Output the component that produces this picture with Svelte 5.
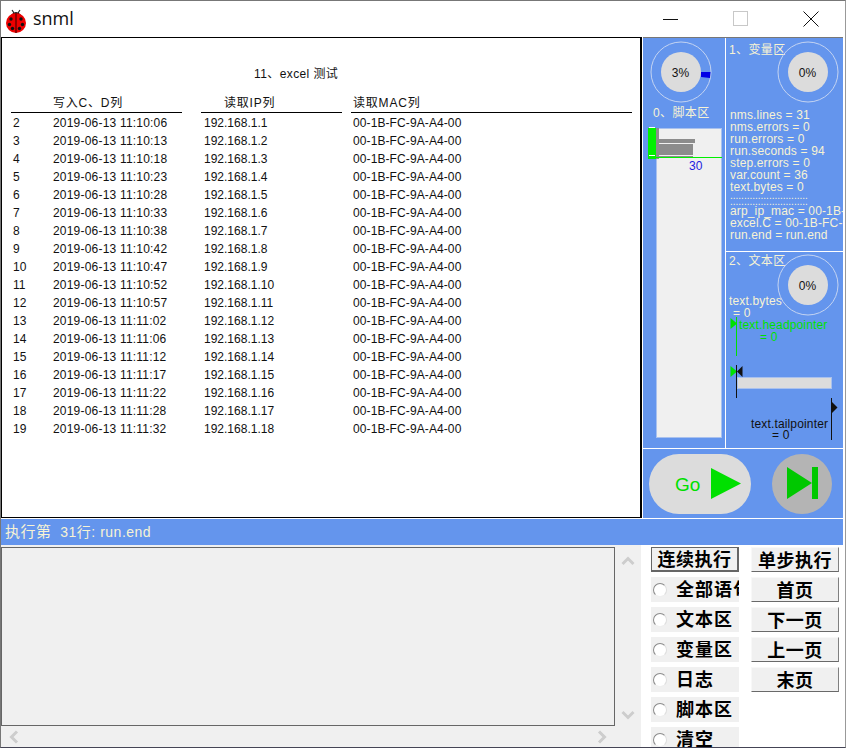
<script>
  const times = ['11:10:06','11:10:13','11:10:18','11:10:23','11:10:28','11:10:33','11:10:38','11:10:42','11:10:47','11:10:52','11:10:57','11:11:02','11:11:06','11:11:12','11:11:17','11:11:22','11:11:28','11:11:32'];
  const rows = times.map((t, i) => ({ n: i + 2, time: '2019-06-13 ' + t, ip: '192.168.1.' + (i + 1), mac: '00-1B-FC-9A-A4-00' }));
  const vars = ['nms.lines = 31','nms.errors = 0','run.errors = 0','run.seconds = 94','step.errors = 0','var.count = 36','text.bytes = 0'];
  const radios = ['全部语句','文本区','变量区','日志','脚本区','清空'];
  const pages = ['首页','下一页','上一页','末页'];
</script>

{#snippet gauge(label, arc)}
  <svg class="gauge" width="64" height="64" viewBox="0 0 64 64">
    <circle cx="32" cy="32" r="30" fill="none" stroke="#c4d4f2" stroke-width="1" />
    <circle cx="32" cy="32" r="20" fill="#dcdcdc" />
    {#if arc}
      <path d="M52 32 H61.500 L61 38 L52 37 Z" fill="#0000e6" />
    {/if}
    <text x="31.5" y="36.5" text-anchor="middle" class="gauge-text">{label}</text>
  </svg>
{/snippet}

<div class="window">
  <header class="titlebar">
    <svg class="bug" width="22" height="26" viewBox="0 0 22 26">
      <path d="M7 3 L9 6 M15 3 L13 6" stroke="#222" stroke-width="1.2" />
      <path d="M6 8 Q11 2 16 8 Z" fill="#111" />
      <ellipse cx="11" cy="16" rx="10" ry="10" fill="#ee0000" />
      <path d="M11 6 V26" stroke="#300" stroke-width="1" />
      <circle cx="6" cy="12" r="1.7" fill="#111" /><circle cx="16" cy="12" r="1.7" fill="#111" />
      <circle cx="4.5" cy="17.5" r="1.7" fill="#111" /><circle cx="17.5" cy="17.5" r="1.7" fill="#111" />
      <circle cx="7.5" cy="21.5" r="1.7" fill="#111" /><circle cx="14.5" cy="21.5" r="1.7" fill="#111" />
    </svg>
    <span class="app-name">snml</span>
    <div class="controls">
      <svg width="16" height="16" viewBox="0 0 16 16"><path d="M0 8.5 H15" stroke="#111" /></svg>
      <svg width="16" height="16" viewBox="0 0 16 16"><rect x="0.5" y="0.5" width="14" height="14" fill="none" stroke="#c8c8c8" /></svg>
      <svg width="16" height="16" viewBox="0 0 16 16"><path d="M0.5 0.5 L15.5 15.5 M15.5 0.5 L0.5 15.5" stroke="#111" /></svg>
    </div>
  </header>

  <main class="main">
    <section class="report">
      <h1>11、excel 测试</h1>
      <div class="grid head">
        <div class="c1">写入C、D列</div>
        <div class="c2">读取IP列</div>
        <div class="c3">读取MAC列</div>
      </div>
      {#each rows as r}
        <div class="grid row">
          <div class="cell-1"><span class="num">{r.n}</span><span class="time">{r.time}</span></div>
          <div class="cell-2">{r.ip}</div>
          <div class="cell-3">{r.mac}</div>
        </div>
      {/each}
    </section>

    <aside class="side">
      <div class="script-panel">
        <div class="script-gauge">{@render gauge('3%', true)}</div>
        <div class="panel-title center">0、脚本区</div>
        <div class="script-map">
          <svg width="76" height="312" viewBox="0 0 76 312">
            <rect x="8.500" y="1.500" width="65" height="309" fill="#f0f0f0" stroke="#a9c1ee" />
            <rect x="8" y="1" width="3" height="31" fill="#8c8c8c" />
            <rect x="8" y="12" width="39" height="4" fill="#8c8c8c" />
            <rect x="8" y="17" width="37" height="11" fill="#8c8c8c" />
            <rect x="8" y="29" width="37" height="1" fill="#8c8c8c" />
            <rect x="0" y="1" width="8" height="31" fill="#00f000" />
            <path d="M1 0.5 H7 M1 28.5 H7" stroke="#fff" />
            <rect x="8" y="30" width="66" height="1" fill="#00f000" />
            <text x="41" y="43" class="mark">30</text>
          </svg>
        </div>
      </div>

      <div class="info-col">
        <div class="var-panel">
          <div class="panel-title">1、变量区</div>
          <div class="var-gauge">{@render gauge('0%', false)}</div>
          <div class="var-list">
            {#each vars as v}<div>{v}</div>{/each}
            <div class="dots">............................</div>
            <div class="dots">............................</div>
            <div>arp_ip_mac = 00-1B-FC-9A-A4-00</div>
            <div>excel.C = 00-1B-FC-9A-A4-00</div>
            <div>run.end = run.end</div>
          </div>
        </div>
        <div class="text-panel">
          <div class="panel-title">2、文本区</div>
          <div class="text-gauge">{@render gauge('0%', false)}</div>
          <svg class="pointers" width="117" height="155" viewBox="0 0 117 155">
            <text x="3" y="12" class="cream">text.bytes</text>
            <text x="7" y="24" class="cream">= 0</text>
            <path d="M4.500 25 V36 L11 30.500 Z" fill="#00e000" />
            <path d="M10.500 24 V63" stroke="#00e000" />
            <text x="13" y="36" class="green">text.headpointer</text>
            <text x="34" y="48" class="green">= 0</text>
            <path d="M4.500 73 V84 L11 78.500 Z" fill="#00e000" />
            <path d="M16.500 73 V84 L11 78.500 Z" fill="#111" />
            <rect x="11.500" y="84.500" width="94" height="11" fill="#dcdcdc" stroke="#a9c1ee" />
            <path d="M10.500 72 V105" stroke="#111" />
            <path d="M105.500 105 V147" stroke="#111" />
            <path d="M106 109 V120 L111.500 114.500 Z" fill="#111" />
            <text x="25" y="135" class="dark">text.tailpointer</text>
            <text x="46" y="146" class="dark">= 0</text>
          </svg>
        </div>
      </div>

      <div class="run-panel">
        <svg width="200" height="69" viewBox="0 0 200 69">
          <rect x="6" y="5" width="102" height="60" rx="30" fill="#dcdcdc" />
          <text x="32" y="42" class="go">Go</text>
          <path d="M68 19 V50 L98 34.500 Z" fill="#00e000" />
          <circle cx="159" cy="35" r="30" fill="#b4b4b4" />
          <path d="M144 18 V50 L169 34 Z" fill="#00c800" />
          <rect x="169" y="18" width="6" height="32" fill="#00c800" />
        </svg>
      </div>
    </aside>
  </main>

  <div class="status"><span class="status-cjk">执行第</span>&nbsp; 31行: run.end</div>

  <section class="console">
    <div class="log-area">
      <div class="log-row">
        <div class="log-box"></div>
        <div class="vscroll">
          <svg width="14" height="10" viewBox="0 0 14 10"><path d="M1.500 8 L7 2.500 L12.500 8" fill="none" stroke="#cdcdcd" stroke-width="3" /></svg>
          <svg width="14" height="10" viewBox="0 0 14 10"><path d="M1.500 2 L7 7.500 L12.500 2" fill="none" stroke="#cdcdcd" stroke-width="3" /></svg>
        </div>
      </div>
      <div class="hscroll">
        <svg width="10" height="14" viewBox="0 0 10 14"><path d="M8 1.500 L2.500 7 L8 12.500" fill="none" stroke="#cdcdcd" stroke-width="3" /></svg>
        <svg width="10" height="14" viewBox="0 0 10 14"><path d="M2 1.500 L7.500 7 L2 12.500" fill="none" stroke="#cdcdcd" stroke-width="3" /></svg>
      </div>
    </div>

    <div class="tools">
      <div class="tool-col">
        <button class="btn default">连续执行</button>
        {#each radios as label}
          <div class="radio"><span class="dot"></span><span class="radio-text">{label}</span></div>
        {/each}
      </div>
      <div class="tool-col">
        <button class="btn">单步执行</button>
        {#each pages as label}
          <button class="btn">{label}</button>
        {/each}
      </div>
    </div>
  </section>
</div>

<style>
  :global(body) {
    margin: 0;
    background: #fff;
  }

  .window {
    width: 846px;
    height: 748px;
    box-sizing: border-box;
    border: 1px solid #777;
    border-right-color: #999;
    border-bottom-color: #445;
    overflow: hidden;
    display: flex;
    flex-direction: column;
    background: #fff;
    font-family: "Liberation Sans", "Noto Sans CJK SC", sans-serif;
  }

  .titlebar {
    height: 36px;
    flex: none;
    display: flex;
    align-items: center;
    padding-left: 4px;
  }

  .bug {
    margin-top: 1px;
  }

  .app-name {
    margin-left: 6px;
    font-family: "Open Sans", sans-serif;
    font-size: 18px;
    color: #111;
    line-height: 34px;
    margin-bottom: 2px;
  }

  .controls {
    margin-left: auto;
    margin-bottom: 1px;
    padding-right: 26px;
    display: flex;
    gap: 54px;
  }

  .main {
    height: 481px;
    flex: none;
    display: flex;
  }

  .report {
    width: 641px;
    box-sizing: border-box;
    border: 1px solid #000;
    border-right-width: 2px;
    padding-left: 9px;
    font-size: 12px;
    color: #111;
  }

  h1 {
    margin: 28px 0 0;
    padding-left: 243px;
    font-size: 12px;
    font-weight: normal;
    line-height: 16px;
    letter-spacing: 0.4px;
  }

  .grid {
    display: grid;
    grid-template-columns: 190px 150px 281px;
  }

  .head {
    margin-top: 12px;
    height: 18px;
    line-height: 18px;
    letter-spacing: 0.8px;
  }

  .head > div {
    border-bottom: 1px solid #000;
  }

  .c1 {
    padding-left: 42px;
    margin-right: 19px;
  }

  .c2 {
    padding-left: 23px;
    margin-right: 9px;
  }

  .c3 {
    padding-left: 2px;
  }

  .row {
    height: 18px;
    line-height: 22px;
  }

  .num {
    display: inline-block;
    width: 40px;
  }

  .time {
    letter-spacing: 0.2px;
  }

  .cell-1 {
    padding-left: 2px;
  }

  .cell-2 {
    padding-left: 3px;
  }

  .cell-3 {
    padding-left: 2px;
    letter-spacing: 0.1px;
  }

  .side {
    margin-left: 1px;
    width: 200px;
    background: #6495ed;
    border-top: 1px solid #777;
    display: grid;
    grid-template-columns: 83px 117px;
    grid-template-rows: 411px 1fr;
    box-sizing: border-box;
    color: #f7f3d4;
  }

  .script-panel {
    border-right: 1px solid #fff;
    border-bottom: 1px solid #fff;
    box-sizing: border-box;
  }

  .script-gauge {
    padding: 2px 0 0 6px;
    height: 64px;
  }

  .gauge {
    display: block;
  }

  .gauge-text {
    font-size: 12px;
    fill: #111;
  }

  .panel-title {
    font-size: 12px;
    line-height: 18px;
    letter-spacing: 0.4px;
    white-space: nowrap;
  }

  .center {
    padding-left: 10px;
  }

  .script-map {
    margin-top: 5px;
    padding-left: 5px;
  }

  .script-map svg {
    display: block;
  }

  .mark {
    font-size: 12px;
    fill: #2222e0;
  }

  .info-col {
    display: flex;
    flex-direction: column;
    border-bottom: 1px solid #fff;
    box-sizing: border-box;
    width: 117px;
  }

  .var-panel {
    height: 214px;
    flex: none;
    box-sizing: border-box;
    border-bottom: 1px solid #fff;
    position: relative;
    padding: 3px 0 0 3px;
    overflow: hidden;
  }

  .var-gauge {
    position: absolute;
    top: 2px;
    right: 3px;
  }

  .text-gauge {
    position: absolute;
    top: 1px;
    right: 3px;
  }

  .var-list {
    margin-top: 50px;
    padding-left: 1px;
    font-size: 12px;
    line-height: 12px;
    letter-spacing: 0.15px;
    white-space: nowrap;
  }

  .dots {
    height: 6px;
    line-height: 6px;
    font-size: 10px;
    letter-spacing: 0;
  }

  .text-panel {
    flex: 1;
    position: relative;
    padding: 0 0 0 3px;
    overflow: hidden;
  }

  .pointers {
    display: block;
    position: absolute;
    left: 0;
    top: 41px;
  }

  .pointers text {
    font-size: 12px;
    letter-spacing: 0.15px;
  }

  .cream {
    fill: #f7f3d4;
  }

  .green {
    fill: #00e000;
  }

  .dark {
    fill: #111;
  }

  .run-panel {
    grid-column: 1 / 3;
  }

  .run-panel svg {
    display: block;
  }

  .go {
    font-size: 19px;
    fill: #00e000;
  }

  .status {
    height: 26px;
    margin-top: 1px;
    margin-right: 2px;
    flex: none;
    background: #6495ed;
    color: #f7f3d4;
    font-size: 14px;
    line-height: 26px;
    letter-spacing: 0.5px;
    padding-left: 4px;
  }

  .status-cjk {
    font-size: 15px;
  }

  .console {
    flex: 1;
    display: flex;
    min-height: 0;
  }

  .log-area {
    width: 640px;
    flex: none;
    background: #f0f0f0;
    display: flex;
    flex-direction: column;
  }

  .log-row {
    height: 179px;
    margin-top: 2px;
    display: flex;
  }

  .log-box {
    width: 614px;
    box-sizing: border-box;
    border: 1px solid #666;
  }

  .vscroll {
    flex: 1;
    display: flex;
    flex-direction: column;
    justify-content: space-between;
    align-items: center;
    padding: 9px 0 6px;
  }

  .hscroll {
    flex: 1;
    width: 614px;
    display: flex;
    justify-content: space-between;
    align-items: center;
    padding: 0 8px;
    box-sizing: border-box;
  }

  .tools {
    display: flex;
    gap: 12px;
    padding: 2px 0 0 10px;
  }

  .tool-col {
    width: 88px;
    display: flex;
    flex-direction: column;
    gap: 5px;
  }

  .btn {
    height: 25px;
    padding: 0 0 2px;
    box-sizing: border-box;
    background: #f0f0f0;
    border: 1px solid;
    border-color: #f8f8f8 #808080 #696969 #f8f8f8;
    font-family: "Noto Sans CJK SC", sans-serif;
    font-size: 18px;
    font-weight: 700;
    line-height: 20px;
    letter-spacing: 0.5px;
    color: #000;
    white-space: nowrap;
  }

  .default {
    border: 2px solid #666;
    border-top-width: 1px;
    border-left-width: 1px;
    border-bottom-width: 2px;
  }

  .radio {
    height: 25px;
    flex: none;
    background: #f0f0f0;
    display: flex;
    align-items: center;
    overflow: hidden;
    white-space: nowrap;
  }

  .dot {
    width: 12px;
    height: 12px;
    flex: none;
    margin-left: 2px;
    border-radius: 50%;
    background: #fff;
    border: 1.5px solid;
    border-color: #8a8a8a #ddd #eee #8a8a8a;
  }

  .radio-text {
    margin-left: 9px;
    margin-bottom: 2px;
    font-family: "Noto Sans CJK SC", sans-serif;
    font-size: 18px;
    font-weight: 700;
    line-height: 23px;
    letter-spacing: 1px;
    color: #000;
  }
</style>
